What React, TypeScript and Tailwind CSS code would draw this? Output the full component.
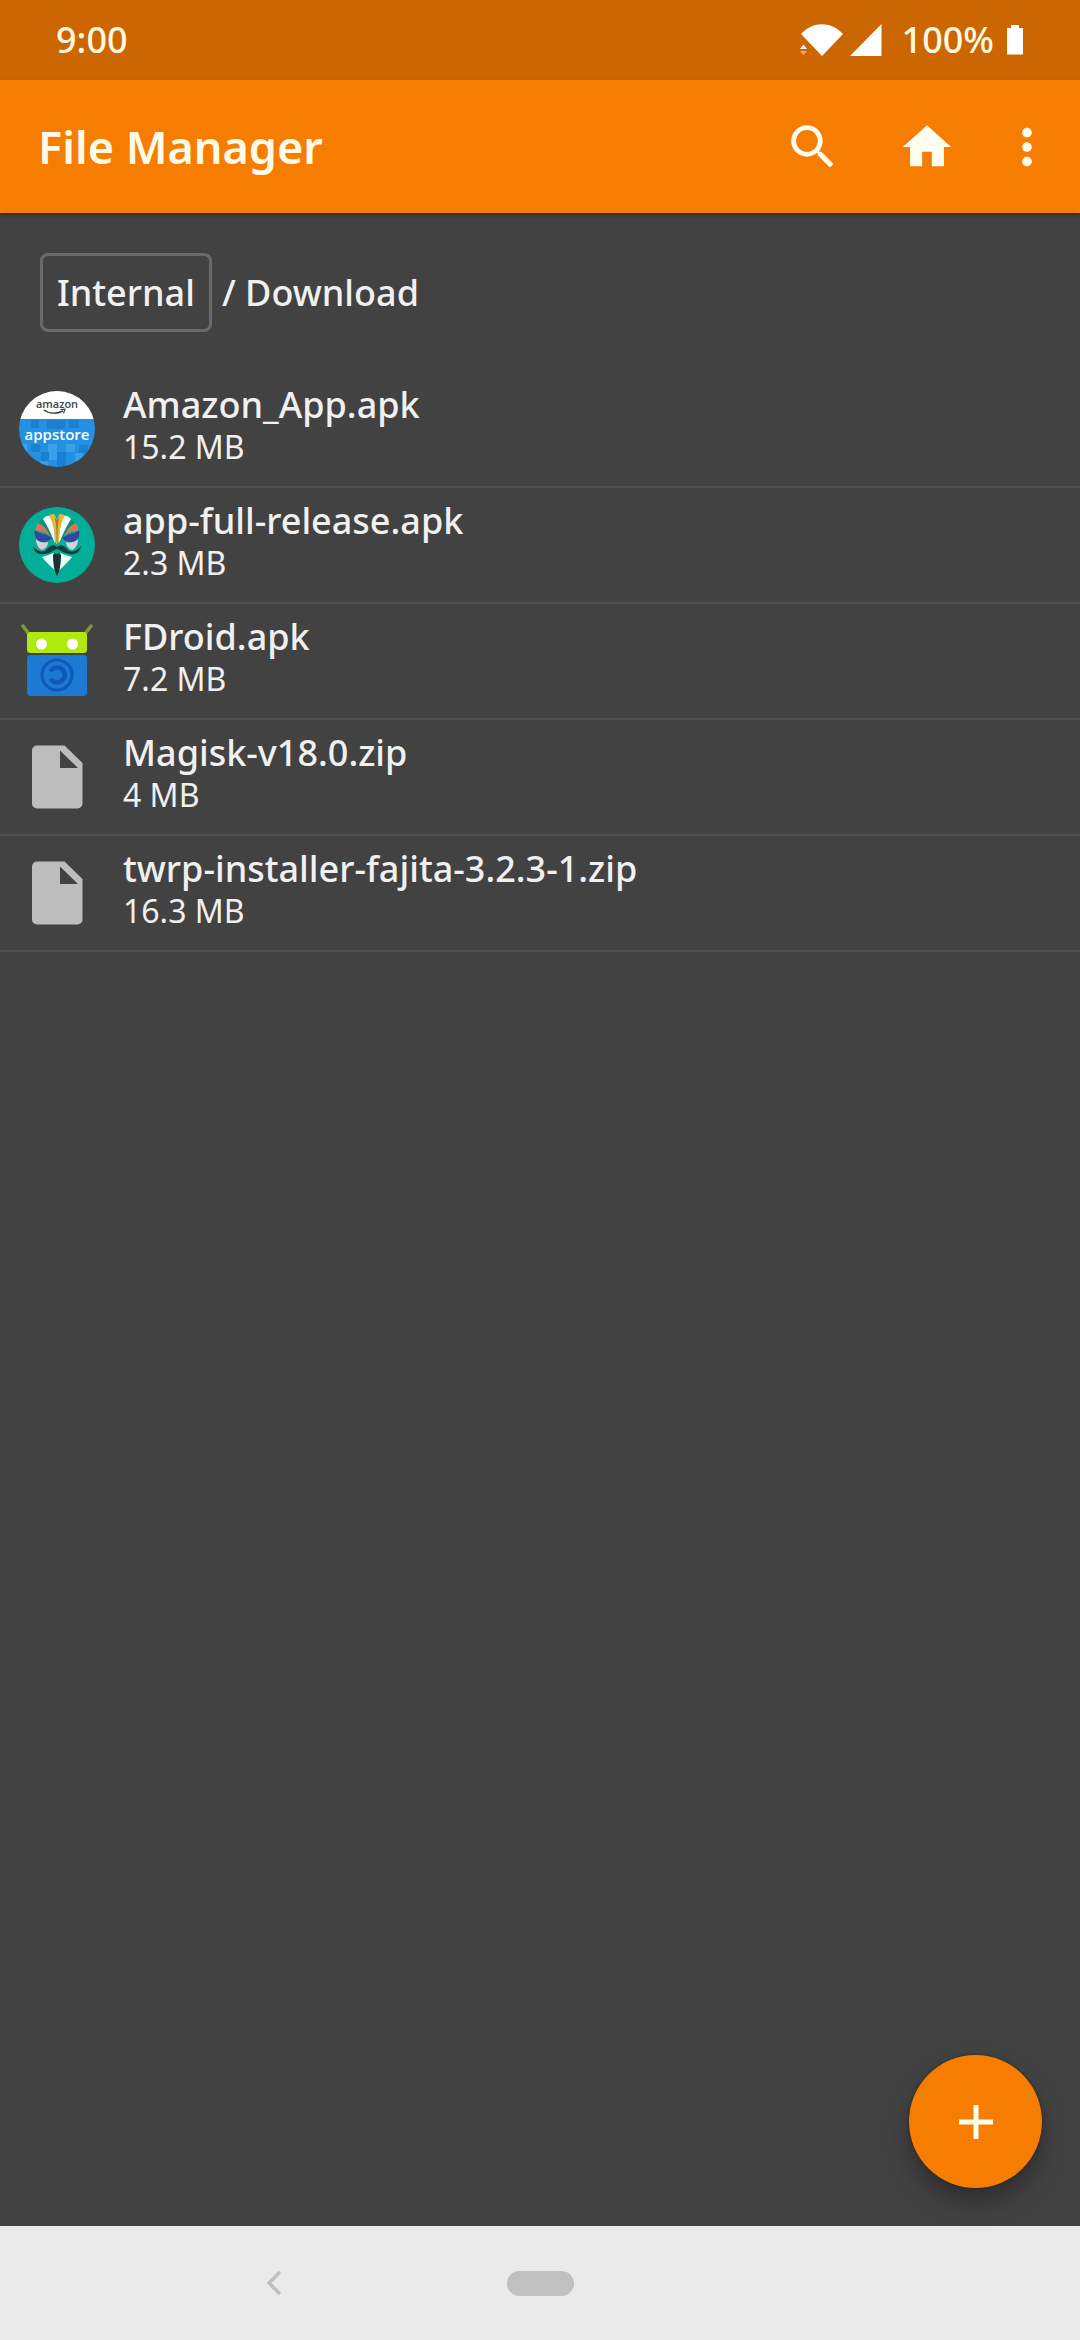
import type { ReactNode } from "react";

function WifiIcon() {
  return (
    <svg viewBox="0 0 44 32" className="h-8 w-11" fill="#fff" aria-hidden="true">
      <path d="M1 10C13-3 31-3 43 10L22 32Z" />
      <path d="M0 25l3.500-4.500L7 25Z" />
      <path d="M0 27h7l-3.500 4Z" fillOpacity=".45" />
    </svg>
  );
}

function SignalIcon() {
  return (
    <svg viewBox="0 0 32 32" className="h-8 w-8" fill="#fff" aria-hidden="true">
      <path d="M31.500 0V32H0Z" />
    </svg>
  );
}

function BatteryIcon() {
  return (
    <svg viewBox="0 0 18 30" className="h-[30px] w-[18px]" fill="#fff" aria-hidden="true">
      <path d="M5 0h8v3h4V29.500H1V3H5Z" />
    </svg>
  );
}

function MaterialIcon({ d }: { d: string }) {
  return (
    <svg viewBox="0 0 24 24" className="h-[58px] w-[58px]" fill="#fffdf0" aria-hidden="true">
      <path d={d} />
    </svg>
  );
}

const SEARCH =
  "M15.500 14h-.79l-.28-.27A6.471 6.471 0 0 0 16 9.500 6.500 6.500 0 1 0 9.500 16c1.610 0 3.090-.59 4.230-1.570l.27.28v.79l5 4.990L20.490 19l-4.990-5zm-6 0C7.010 14 5 11.990 5 9.500S7.010 5 9.500 5 14 7.010 14 9.500 11.990 14 9.500 14z";
const HOME = "M10 20v-6h4v6h5v-8h3L12 3 2 12h3v8z";
const MORE =
  "M12 8c1.100 0 2-.9 2-2s-.9-2-2-2-2 .9-2 2 .9 2 2 2zm0 2c-1.100 0-2 .9-2 2s.9 2 2 2 2-.9 2-2-.9-2-2-2zm0 6c-1.100 0-2 .9-2 2s.9 2 2 2 2-.9 2-2-.9-2-2-2z";

function AmazonIcon() {
  return (
    <svg viewBox="0 0 76 76" className="h-[76px] w-[76px]" aria-hidden="true">
      <defs>
        <clipPath id="disc">
          <circle cx="38" cy="38" r="38" />
        </clipPath>
      </defs>
      <g clipPath="url(#disc)">
        <path d="M0 0H76V76H0Z" fill="#2490e2" />
        <path d="M12 29h8v8h-8zM28 29h18v9H28zM50 29h10v8H50zM38 61h9v15h-9zM22 61h8v9h-8zM12 53h9v8h-9zM60 54h9v8h-9z" fill="#1a80d2" />
        <path d="M29 53h9v8h-9zM47 53h9v8h-9zM21 70h8v6h-8zM30 61h8v8h-8zM0 53h8v8H0zM56 62h8v8h-8z" fill="#3ba0ea" />
        <path d="M0 0H76V28H0Z" fill="#fff" />
        <text x="38" y="17" textAnchor="middle" fontFamily="Open Sans, sans-serif" fontSize="11" fontWeight="600" fill="#444">
          amazon
        </text>
        <path d="M25 19c5 4 13 4 19 1" stroke="#444" strokeWidth="1.500" fill="none" />
        <path d="M41.500 18.500l4.500-.3-1.500 4" stroke="#444" strokeWidth="1.200" fill="none" />
        <text x="38" y="49" textAnchor="middle" fontFamily="Open Sans, sans-serif" fontSize="15" fontWeight="600" fill="#fff">
          appstore
        </text>
      </g>
    </svg>
  );
}

function MaskHalf() {
  return (
    <g>
      <path d="M24 12c2-3 5-4 8-3 3 9 4 17 4 27-4-8-7-16-12-24Z" fill="#f4fffd" />
      <path d="M30 9c1-2 5-3 6-1l2 5v24l-2-2c0-9-1-18-6-26Z" fill="#e8b83c" />
      <path d="M35.500 10c2 7 2 16 2 25l.5 1V13Z" fill="#a87c28" />
      <path d="M23 12c5 6 9 14 12 23-4-7-9-14-16-17 1-2 2-4 4-6Z" fill="#168c78" />
      <path d="M19 16c-2 3-3 6-2 9 6-2 10 0 14 5-2-6-6-12-12-14Z" fill="#c97d5c" />
      <path d="M16 23c4 4 11 3 17 8-4 5-11 5-15 2-2-3-3-6-2-10Z" fill="#34479f" />
      <path d="M17 32c4 4 8 4 12 3 0 4-3 7-6 8-4-2-6-6-6-11Z" fill="#d9cfdc" />
      <path d="M38 40c-5-4-8 0-11 3-4 3-9 1-13-4 1 6 5 9 11 8 6 0 9-4 13-5Z" fill="#173e3c" />
      <path d="M23 50c5-1 8-3 12-4l1 17c-4-3-9-8-13-13Z" fill="#e9fffb" />
      <path d="M34 48c1-2 3-2 4-1v22c-3-5-4-14-4-21Z" fill="#173332" />
    </g>
  );
}

function MagiskIcon() {
  return (
    <svg viewBox="0 0 76 76" className="h-[76px] w-[76px]" aria-hidden="true">
      <circle cx="38" cy="38" r="38" fill="#03ae98" />
      <MaskHalf />
      <g transform="matrix(-1 0 0 1 76 0)">
        <MaskHalf />
      </g>
    </svg>
  );
}

function FDroidIcon() {
  return (
    <svg viewBox="0 0 76 76" className="h-[76px] w-[76px]" aria-hidden="true">
      <path d="M4 3l6 8M72 3l-6 8" stroke="#7d9d33" strokeWidth="3.500" strokeLinecap="round" />
      <rect x="8" y="9" width="60" height="21" rx="3.500" fill="#aeea0b" />
      <circle cx="22.500" cy="21" r="5.500" fill="#fff" />
      <circle cx="53.500" cy="21" r="5.500" fill="#fff" />
      <rect x="8" y="32" width="60" height="41" rx="3.500" fill="#1c7ad4" />
      <circle cx="38" cy="52" r="15" fill="none" stroke="#0f59b5" strokeWidth="3" />
      <path d="M31.500 48.500a7.500 7.500 0 1 1 0 7" fill="none" stroke="#0f59b5" strokeWidth="4.500" />
    </svg>
  );
}

function DocumentIcon() {
  return (
    <svg viewBox="0 0 76 76" className="h-[76px] w-[76px]" aria-hidden="true">
      <path
        fillRule="evenodd"
        fill="#bdbdbd"
        d="M18 6.500H45.500L63.500 24V64.500a5 5 0 0 1-5 5H18a5 5 0 0 1-5-5V11.500a5 5 0 0 1 5-5ZM41 11.500V29H59Z"
      />
    </svg>
  );
}

const files: { name: string; size: string; icon: ReactNode }[] = [
  { name: "Amazon_App.apk", size: "15.2 MB", icon: <AmazonIcon /> },
  { name: "app-full-release.apk", size: "2.3 MB", icon: <MagiskIcon /> },
  { name: "FDroid.apk", size: "7.2 MB", icon: <FDroidIcon /> },
  { name: "Magisk-v18.0.zip", size: "4 MB", icon: <DocumentIcon /> },
  { name: "twrp-installer-fajita-3.2.3-1.zip", size: "16.3 MB", icon: <DocumentIcon /> },
];

export default function App() {
  return (
    <div className="flex min-h-screen flex-col bg-[#424242] font-['Noto_Sans',sans-serif] text-[#f0f0f0]">
      <div className="flex h-20 items-center bg-[#cc6600] pr-14 pl-14 text-[36px] font-medium text-[#fff8e0]">
        <span>9:00</span>
        <div className="ml-auto flex items-center">
          <WifiIcon />
          <span className="ml-1.5">
            <SignalIcon />
          </span>
          <span className="ml-5">100%</span>
          <span className="ml-3">
            <BatteryIcon />
          </span>
        </div>
      </div>

      <header className="flex h-[133px] items-center bg-[#f77d00] pr-6 pl-[38px] shadow-[0_2px_3px_rgba(0,0,0,0.35)]">
        <h1 className="text-[45px] font-semibold text-[#fffbe8]">File Manager</h1>
        <div className="ml-auto flex items-center">
          <button type="button" aria-label="Search">
            <MaterialIcon d={SEARCH} />
          </button>
          <button type="button" aria-label="Home" className="ml-14">
            <MaterialIcon d={HOME} />
          </button>
          <button type="button" aria-label="More options" className="ml-[42px]">
            <MaterialIcon d={MORE} />
          </button>
        </div>
      </header>

      <main className="relative flex-1">
        <nav aria-label="Path" className="flex items-center px-10 pt-10 pb-10 text-[36px] font-medium">
          <button type="button" className="h-[79px] rounded-lg border-3 border-[#6a6a6a] px-3.5">
            Internal
          </button>
          <span className="ml-2.5">/ Download</span>
        </nav>
        <ul>
          {files.map((f) => (
            <li key={f.name} className="border-b-2 border-[#515151]">
              <button type="button" className="flex h-[114px] w-full items-center pl-[19px] text-left">
                {f.icon}
                <span className="ml-7 flex flex-col pb-2">
                  <span className="text-[36px] leading-[44px] font-medium">{f.name}</span>
                  <span className="text-[32px] leading-[40px]">{f.size}</span>
                </span>
              </button>
            </li>
          ))}
        </ul>
        <button
          type="button"
          aria-label="Add"
          className="absolute right-[38px] bottom-[38px] flex h-[133px] w-[133px] items-center justify-center rounded-full bg-[#f77d00] shadow-[0_14px_24px_rgba(0,0,0,0.3),0_0_3px_rgba(0,0,0,0.4)]"
        >
          <svg viewBox="0 0 34 34" className="h-[34px] w-[34px]" aria-hidden="true">
            <path d="M17 0V34M0 17H34" stroke="#fffdf0" strokeWidth="5" />
          </svg>
        </button>
      </main>

      <footer className="grid h-[114px] grid-cols-4 items-center bg-[#eaeaea]">
        <button type="button" aria-label="Back" className="col-start-1 flex h-full items-center justify-end">
          <svg viewBox="0 0 16 26" className="-mr-3 h-[26px] w-4" fill="none" stroke="#c0c0c0" strokeWidth="3.500" aria-hidden="true">
            <path d="M14 2L3 13L14 24" />
          </svg>
        </button>
        <button type="button" aria-label="Home screen" className="col-span-2 col-start-2 flex h-full items-center justify-center">
          <span className="h-[25px] w-[67px] rounded-full bg-[#c0c0c0]" />
        </button>
      </footer>
    </div>
  );
}
